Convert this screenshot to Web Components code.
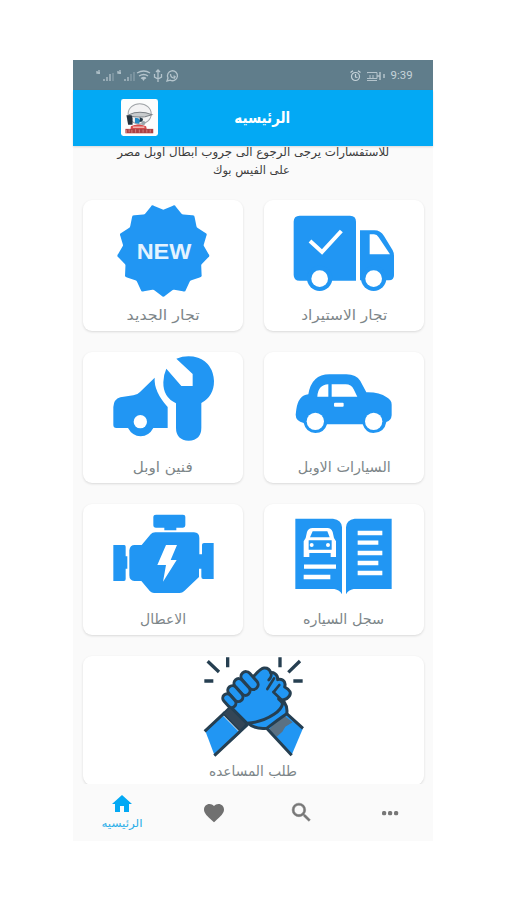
<!DOCTYPE html>
<html lang="ar">
<head>
<meta charset="utf-8">
<title>الرئيسيه</title>
<style>
html,body{margin:0;background:#fff}
body{width:506px;height:900px;overflow:hidden;font-family:"DejaVu Sans",sans-serif}
</style>
</head>
<body>
<opel-app></opel-app>
<script>
// Text fitted horizontally to a given width
customElements.define('fit-text', class extends HTMLElement{
  connectedCallback(){
    const w=+this.getAttribute('w');
    const r=this.attachShadow({mode:'open'});
    r.innerHTML=`<style>:host{display:flex;justify-content:center;width:${w}px;white-space:nowrap;direction:rtl}
    span{display:block;flex:none;transform-origin:50% 50%}</style><span><slot></slot></span>`;
    const s=r.querySelector('span');
    const n=s.getBoundingClientRect().width;
    if(n) s.style.transform=`scaleX(${w/n})`;
  }
});

customElements.define('status-bar', class extends HTMLElement{
  connectedCallback(){
    this.attachShadow({mode:'open'}).innerHTML=`<style>
    :host{display:flex;justify-content:space-between;align-items:center;box-sizing:border-box;height:30px;padding:1px 20px 0 23px;background:#607d8b;color:#c6d3d9;font:11px Roboto,sans-serif;direction:ltr}
    svg{display:block;flex:none}.r{display:flex;align-items:center;gap:6px}.r fit-text{direction:ltr}
    </style>
    <svg width="84" height="14" viewBox="0 0 84 14" fill="none" stroke="#b4c4cc" stroke-width="1.3">
      <path d="M1 2v2h3M3 1v4M8 12V10M11 12V8M14 12V5" /><path d="M17 12V4" opacity=".5"/>
      <path d="M22 2v2h3M24 1v4M29 12V10M32 12V8"/><path d="M35 12V5M38 12V3" opacity=".5"/>
      <path d="M41 4q7-4 13 0M43 7q5-3 9 0M45 9.500q3-2 5 0" /><path d="M45.500 9h4l-2 3z" fill="#b4c4cc" stroke="none"/>
      <path d="M62 1v12M58.500 5v3l3.500 2 3.500-2V5M60 3l2-2 2 2"/>
      <path d="M71 12l1-3a5 5 0 1 1 2.200 2.200zM74.500 5q0 4 4 4l.5-1.500-1.500-.7"/>
    </svg>
    <div class="r"><svg width="11" height="12" viewBox="0 0 11 12" fill="none" stroke="#c6d3d9" stroke-width="1.200"><circle cx="5.500" cy="6.500" r="4"/><path d="M5.500 4v3l2 .5M.5 2.500L3 .8M10.500 2.500L8 .8"/></svg>
    <svg width="22" height="10" viewBox="0 0 22 10" fill="none" stroke="#b4c4cc"><path d="M-4 9.500h14M0 1.500h10v6H-2zM3 4v3M6 4v3"/><path d="M13 1v8M17 3v4M10 5h3" stroke-width="1.500"/></svg>
    <fit-text w="22" style="margin-left:-4px">9:39</fit-text></div>`;
  }
});

customElements.define('app-bar', class extends HTMLElement{
  connectedCallback(){
    this.attachShadow({mode:'open'}).innerHTML=`<style>
    :host{display:grid;grid-template-columns:36px 56px;column-gap:77px;align-items:center;box-sizing:border-box;height:55.500px;padding-left:48px;background:#03a9f4;color:#fff;position:relative;z-index:1;box-shadow:0 1px 2px #0002;font-size:15.500px;font-weight:bold;line-height:24px}
    svg{display:block}
    </style>
    <svg width="37" height="37" viewBox="172 138 109 109">
      <rect x="172" y="138" width="109" height="109" rx="7" fill="#fcfdfd"/>
      <ellipse cx="227" cy="182" rx="34" ry="30" fill="#f3f3f4" stroke="#a0a4a8" stroke-width="3"/>
      <path d="M196 184Q226 170 263 184L243 190Q220 193 196 188z" fill="#c9ccce" stroke="#7d8287" stroke-width="3"/>
      <path d="M188 186h15l3 8v20h-13z" fill="#24313d"/><path d="M213 193l10 2 6 6-4 10-12-2z" fill="#2389c4"/>
      <path d="M227 192l10 4-2 8-8 2z" fill="#233947"/><circle cx="238" cy="209" r="6" fill="#9aa6ab"/>
      <path d="M201 218q20-10 45 0l2 10h-48z" fill="#d94b4b"/><path d="M185 226h82v13h-82z" fill="#ac4145"/>
      <path d="M188 229v9M196 227v9M204 229v9M215 227v10M226 228v9M237 228v9M248 228v9M258 228v9" stroke="#d98985" stroke-width="2.500"/>
      <path d="M207 221h34" stroke="#f4c6c0" stroke-width="4"/>
    </svg>
    <fit-text w="56"><slot></slot></fit-text>`;
  }
});

customElements.define('menu-card', class extends HTMLElement{
  connectedCallback(){
    this.attachShadow({mode:'open'}).innerHTML=`<style>
    :host{display:flex;flex-direction:column;align-items:center;box-sizing:border-box;height:131px;background:#fff;border-radius:9px;box-shadow:0 1px 2.500px #0002;color:#7d8689;font-size:14px;line-height:22px}
    ::slotted(svg){display:block;width:160px;height:104px;flex:none;overflow:visible}
    </style><slot name="icon"></slot><fit-text w="${this.getAttribute('w')}"><slot></slot></fit-text>`;
  }
});

customElements.define('tab-bar', class extends HTMLElement{
  connectedCallback(){
    this.attachShadow({mode:'open'}).innerHTML=`<style>
    :host{display:grid;grid-template-columns:98px 85px 91px 86px;height:57px;background:#fafafa;position:relative}
    div{display:flex;flex-direction:column;align-items:center;justify-content:center}
    .active{color:#2aaee8;font-size:11px;line-height:17px}
    svg{display:block}
    </style>
    <div class="active"><svg width="24" height="22" viewBox="0 0 24 22"><path fill="#03a9f4" d="M10 19v-6h4v6h5v-8h3L12 2 2 11h3v8z"/></svg><fit-text w="41">الرئيسيه</fit-text></div>
    <div><svg width="24" height="24" viewBox="0 0 24 24"><path fill="#707070" d="M12 21.350l-1.450-1.320C5.400 15.360 2 12.280 2 8.500 2 5.420 4.420 3 7.500 3c1.740 0 3.410.81 4.500 2.090C13.090 3.810 14.760 3 16.500 3 19.580 3 22 5.420 22 8.500c0 3.780-3.400 6.860-8.550 11.540z"/></svg></div>
    <div><svg width="25" height="25" viewBox="0 0 24 24"><path fill="#777" stroke="#777" stroke-width=".5" d="M15.500 14h-.79l-.28-.27A6.470 6.470 0 0 0 16 9.500 6.500 6.500 0 1 0 9.500 16c1.610 0 3.090-.59 4.230-1.570l.27.28v.79l5 4.990L20.490 19zm-6 0a4.500 4.500 0 1 1 0-9 4.500 4.500 0 0 1 0 9z"/></svg></div>
    <div><svg width="24" height="24" viewBox="0 0 24 24" fill="#777"><rect x="4" y="10" width="4.200" height="4.200" rx="1.500"/><rect x="10" y="10" width="4.200" height="4.200" rx="1.500"/><rect x="16" y="10" width="4.200" height="4.200" rx="1.500"/></svg></div>`;
  }
});

const badge=(()=>{let d='';const n=13;
  for(let i=0;i<n;i++){
    const p=(k,r)=>{const a=Math.PI/2+k*2*Math.PI/n;return (268+r*Math.cos(a)).toFixed(1)+' '+(181+r*Math.sin(a)).toFixed(1)};
    d+=(i?'L':'M')+p(i-.08,136)+'Q'+p(i,142)+' '+p(i+.08,136)+'L'+p(i+.44,123)+'Q'+p(i+.5,121)+' '+p(i+.56,123);
  }return d+'z'})();

customElements.define('opel-app', class extends HTMLElement{
  connectedCallback(){
    this.attachShadow({mode:'open'}).innerHTML=`<style>
    :host{display:flex;flex-direction:column;box-sizing:border-box;width:360px;height:781px;margin:60px 0 0 73px;background:#fafafa}
    main{flex:1;min-height:0;overflow:hidden}
    .note{display:flex;flex-direction:column;align-items:center;height:54.500px;color:#3c3c3c;font-size:11.500px;line-height:18.500px}
    .note fit-text:first-child{margin-top:-3px}
    .note fit-text:last-child{margin-right:3px}
    .grid{display:grid;grid-template-columns:160px 160px;gap:21px 21px;padding:0 9px 0 10px}
    .wide{grid-column:1/3;height:129px}
    [slot=icon]{fill:#2196f3}.w{fill:#fff}
    </style>
    <status-bar></status-bar><app-bar>الرئيسيه</app-bar>
    <main>
      <div class="note"><fit-text w="272">للاستفسارات يرجى الرجوع الى جروب ابطال اوبل مصر</fit-text><fit-text w="77">على الفيس بوك</fit-text></div>
      <div class="grid">
      <menu-card w="73"><svg slot="icon" viewBox="27 30 480 312"><path d="${badge}"/><text x="270" y="206" text-anchor="middle" textLength="164" lengthAdjust="spacingAndGlyphs" font-family="Liberation Sans" font-weight="bold" font-size="67" fill="#e4f3ff">NEW</text></svg>تجار الجديد</menu-card>
      <menu-card w="86"><svg slot="icon" viewBox="30 30 480 312"><path d="M137 77H288q18 0 18 18V272H137q-18 0-18-18V95q0-18 18-18z"/><path d="M318 121H361q19 0 29 17l26 43q4 7 4 17v58q0 15-15 15H318z"/><circle cx="197" cy="265" r="38"/><circle cx="359" cy="265" r="38"/><g class="w"><circle cx="197" cy="266" r="25"/><circle cx="359" cy="266" r="25"/><path d="M347 133h13q9 0 14 9l34 51h-61z"/></g><path d="M168 153l36 33 58-63" fill="none" stroke="#fff" stroke-width="12"/></svg>تجار الاستيراد</menu-card>
      <menu-card w="60"><svg slot="icon" viewBox="27 30 480 312"><path d="M118 195Q119 172 139 166L178 160Q190 159 198 150L242 107Q239 148 281 195V258H238Q225 282 200 283Q175 282 162 258H127Q118 258 118 249z"/><circle class="w" cx="199" cy="239" r="20"/><path d="M307 50Q339 37 372 47Q417 64 420 117Q420 162 382 183V257Q382 294 344 296Q306 294 306 257V184Q267 166 268 121Q268 99 277 80L322 132H356V96z"/></svg>فنين اوبل</menu-card>
      <menu-card w="93"><svg slot="icon" viewBox="30 30 480 312"><path d="M127 202Q133 160 163 157Q173 97 226 97H277Q307 97 319 117L337 151Q376 150 398 166Q413 174 413 188V220Q412 235 397 240Q391 273 358 273Q335 273 326 247H219Q211 273 184 273Q156 272 149 243Q125 237 125 218z"/><g class="w"><path d="M190 164Q192 128 223 127V164zM233 127H275Q292 127 299 142L310 164H233z"/><circle cx="184" cy="238" r="26"/><circle cx="359" cy="238" r="26"/><rect x="240" y="182" width="29" height="12" rx="3"/></g></svg>السيارات الاوبل</menu-card>
      <menu-card w="46"><svg slot="icon" viewBox="27 30 480 312"><path d="M246 62H327Q334 62 334 68V94Q334 101 327 101H307V109H271V101H246Q238 101 238 94V68Q238 62 246 62zM118 153H151Q155 153 155 158V187H160V224H155V255Q155 261 150 261H118zM166 169Q168 153 182 153H203L230 121Q235 115 244 115H360Q376 116 376 132V181H384V152Q384 147 390 147H419V255H388Q382 255 382 248V224H375V249L330 292Q325 297 317 297H240Q233 297 228 292L202 261H181Q166 260 166 244z"/><path class="w" d="M276 153H309L290 198H308L267 263L276 213H250z"/></svg>الاعطال</menu-card>
      <menu-card w="81"><svg slot="icon" viewBox="30 30 480 312"><path d="M124 74H237Q263 77 264 100V301Q257 288 241 285H124zM413 74H302Q277 77 276 100V301Q283 288 299 285H413z"/><path d="M150 218h96M149 249h80M311 117h74M311 146h62M311 177h74M311 207h62M311 237h74" fill="none" stroke="#fff" stroke-width="13"/><path class="w" d="M176 102H220Q232 102 236 114L240 132L246 142V189H230V177H166V189H149V142L155 132L159 114Q163 102 176 102z"/><path d="M176 112H220L227 130H168zM164 139H233V167H164z"/><circle class="w" cx="173" cy="153" r="6"/><circle class="w" cx="222" cy="153" r="6"/></svg>سجل السياره</menu-card>
      <menu-card class="wide" w="88"><svg slot="icon" viewBox="0 33 480 312" stroke="#263f51" stroke-width="9" stroke-linejoin="round">
        <path d="M101 49l34 32M161 37v30M91 108h27M318 37v30M378 48l-35 34M358 108h28" fill="none" stroke-width="10"/>
        <path d="M280 250L353 330L387 250L338 204z" stroke="none"/>
        <path d="M285 254L325 208L356 232L334 245L325 260L308 275z" fill="#5b7183" stroke="none"/>
        <path d="M220 233Q242 254 278 250Q310 225 338 206Q342 188 330 170L260 190z"/>
        <path d="M278 250L353 331M387 250L338 206" fill="none"/>
        <path d="M147 212L94 258L122 332L199 265z" stroke="none"/><path d="M153 202L92 259M121 332L221 238" fill="none"/>
        <path d="M147 206L168 185L219 236L198 258z" fill="#344656" stroke-width="5"/>
        <path d="M172 188L219 235Q264 232 300 208Q322 194 326 176Q322 168 314 162Q326 168 338 161Q352 151 348 140Q344 132 332 126Q336 112 327 106Q319 101 311 104Q312 92 303 86Q297 82 290 83Q286 68 270 69Q260 70 239 94L190 148z"/>
        <path d="M291 84L278 102M311 104L280 136M332 126L303 143M300 143L325 170" fill="none" stroke="none"/>
        <path d="M290 83q6 10-6 22M300 100L280 132M316 120L300 140M298 141L324 166" fill="none" stroke-linecap="round" stroke-width="8"/>
        <g><rect x="-15" y="-30" width="30" height="62" rx="15" transform="translate(226 106) rotate(-42)"/><rect x="-14" y="-29" width="28" height="58" rx="14" transform="translate(204 126) rotate(-42)"/><rect x="-14" y="-27" width="28" height="54" rx="14" transform="translate(184 146) rotate(-42)"/><rect x="-13" y="-23" width="26" height="46" rx="13" transform="translate(166 167) rotate(-42)"/></g>
      </svg>طلب المساعده</menu-card>
      </div>
    </main>
    <tab-bar></tab-bar>`;
  }
});
</script>
</body>
</html>
